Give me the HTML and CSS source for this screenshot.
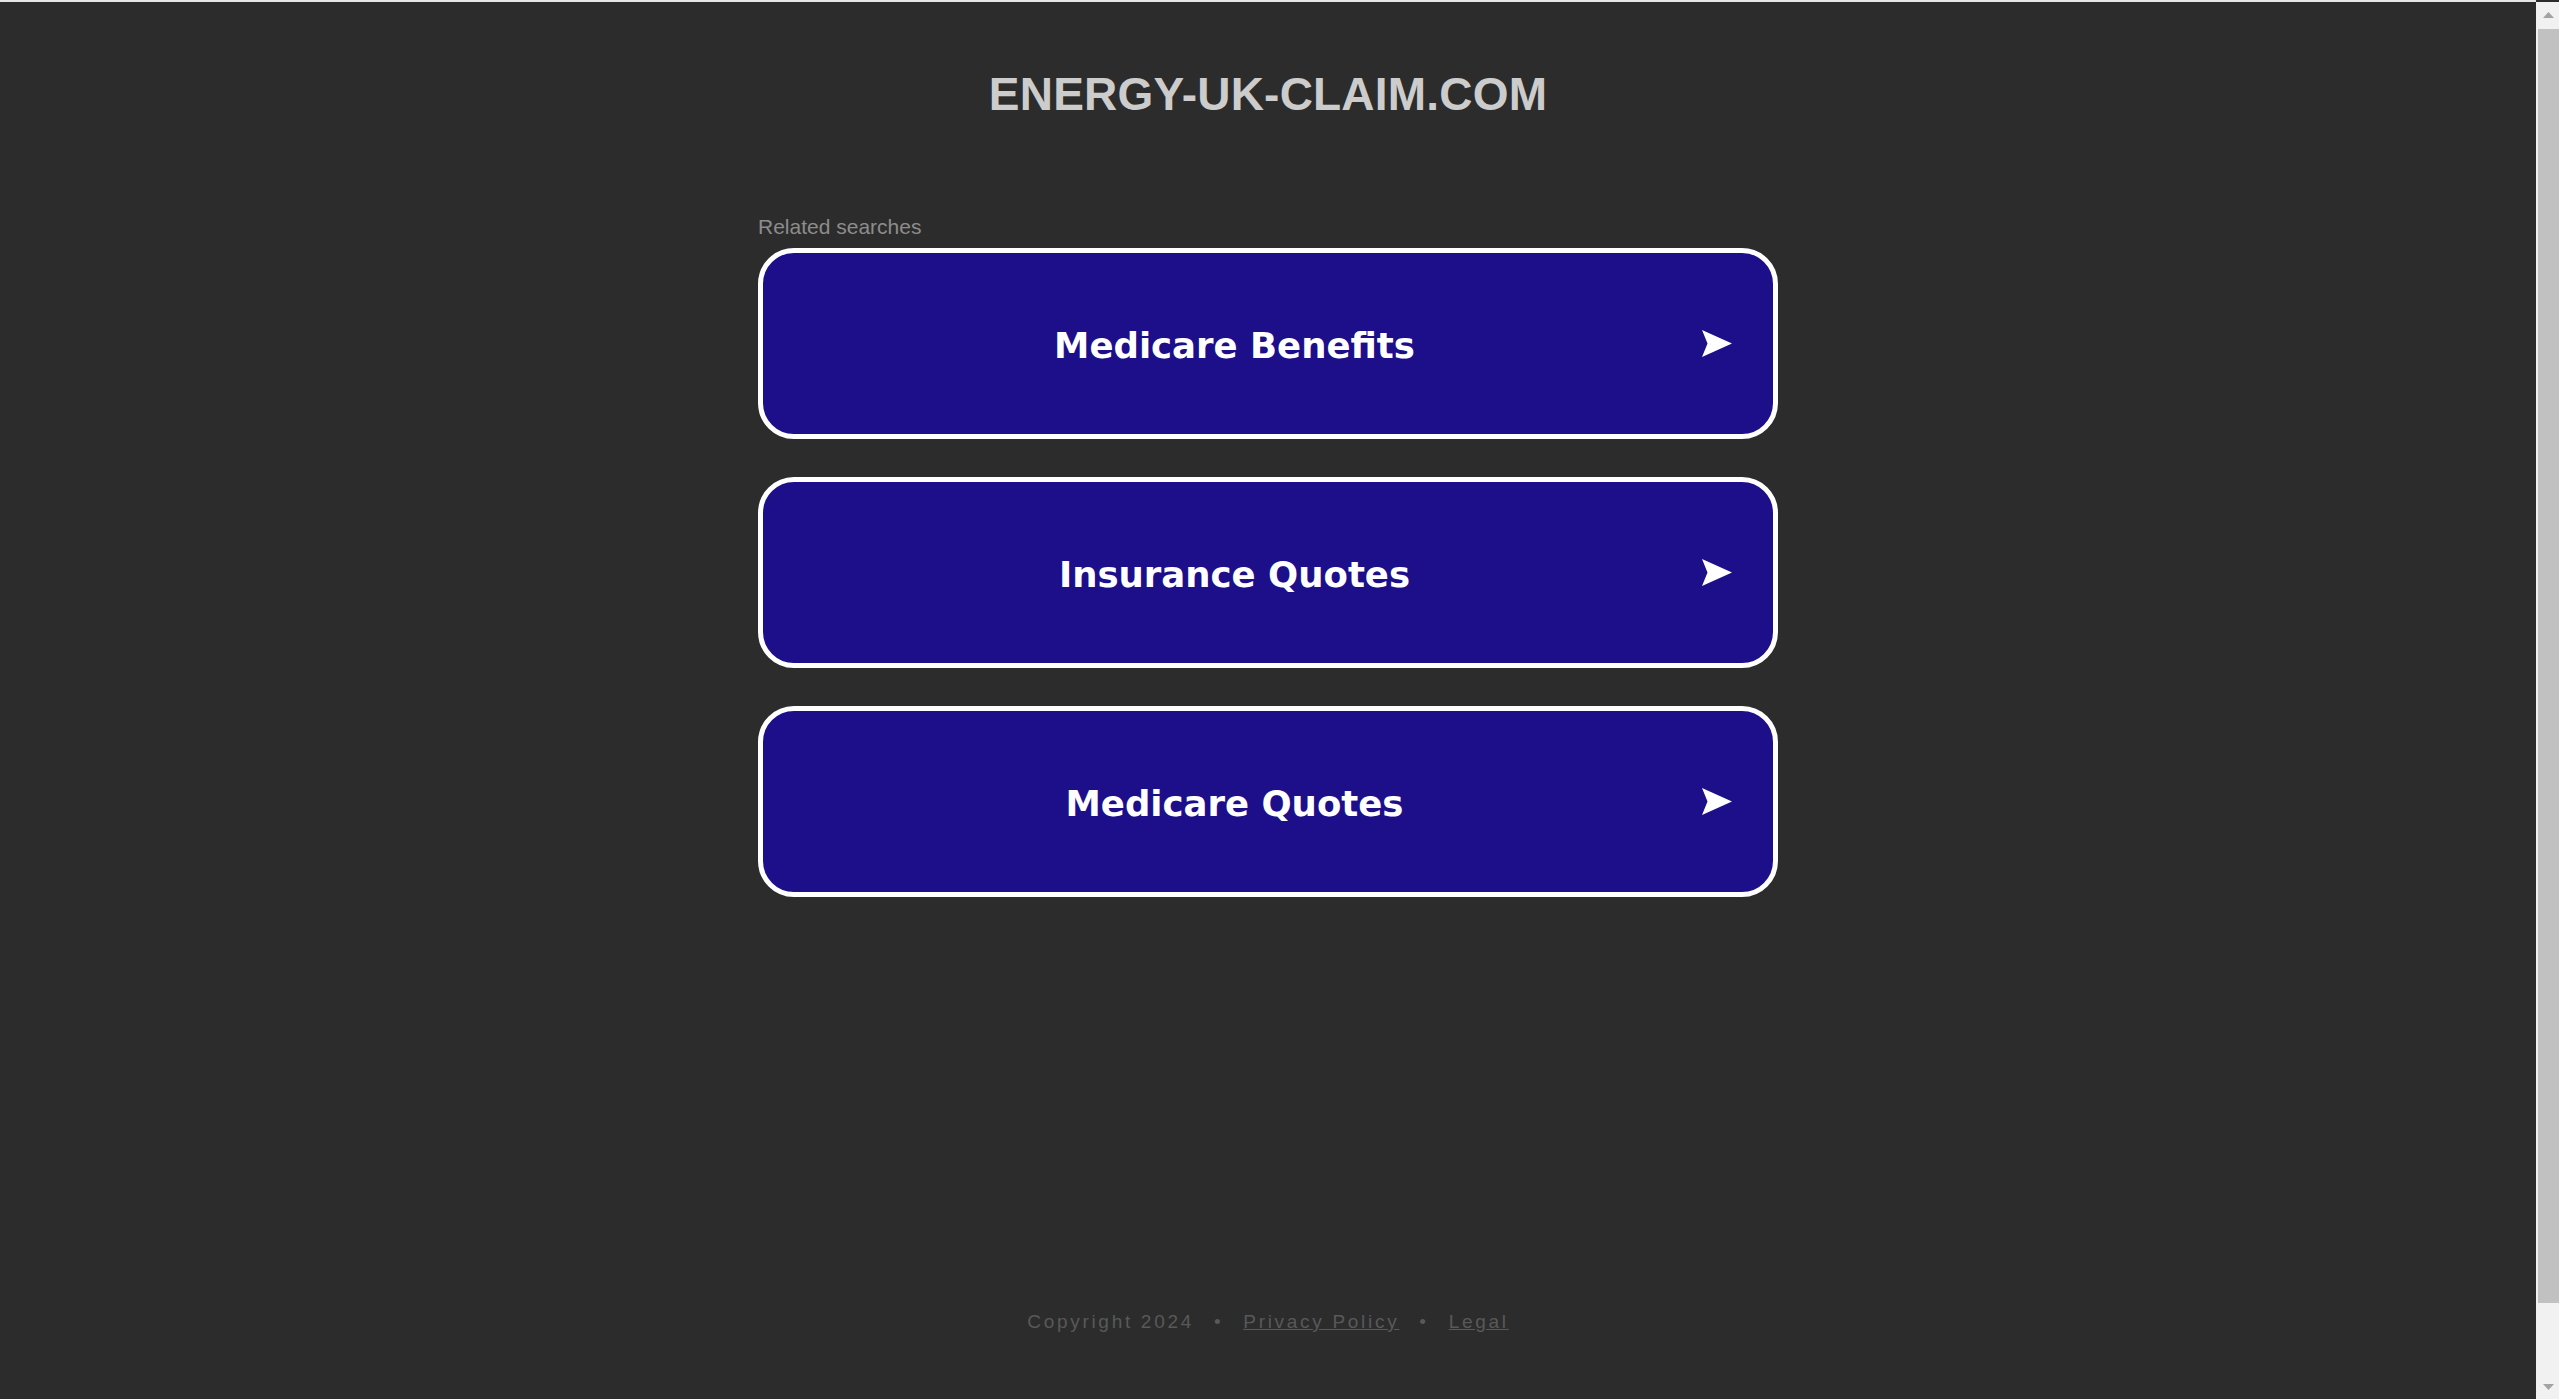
FILE: index.html
```html
<!DOCTYPE html>
<html lang="en">
<head>
<meta charset="utf-8">
<title>energy-uk-claim.com</title>
<link rel="stylesheet" href="styles.css">
</head>
<body>
<div class="page">
  <header class="header">
    <h1 class="domain">ENERGY-UK-CLAIM.COM</h1>
  </header>
  <main class="main">
    <div class="label">Related searches</div>
    <ul class="links">
      <li><a class="btn" href="#"><span class="btn-text">Medicare Benefits</span><svg class="arrow" width="30" height="27" viewBox="0 0 30 27"><path d="M0 0 L30 13.5 L0 27 L5.5 13.5 Z" fill="#fff"/></svg></a></li>
      <li><a class="btn" href="#"><span class="btn-text">Insurance Quotes</span><svg class="arrow" width="30" height="27" viewBox="0 0 30 27"><path d="M0 0 L30 13.5 L0 27 L5.5 13.5 Z" fill="#fff"/></svg></a></li>
      <li><a class="btn" href="#"><span class="btn-text">Medicare Quotes</span><svg class="arrow" width="30" height="27" viewBox="0 0 30 27"><path d="M0 0 L30 13.5 L0 27 L5.5 13.5 Z" fill="#fff"/></svg></a></li>
    </ul>
  </main>
  <footer class="footer">
    <span>Copyright 2024</span><span class="sep">•</span><a href="#">Privacy Policy</a><span class="sep">•</span><a href="#">Legal</a>
  </footer>
</div>
<div class="scrollbar" aria-hidden="true">
  <div class="sb-btn"><svg width="11" height="6" viewBox="0 0 11 6"><path d="M5.5 0L11 6H0z" fill="#a3a3a3"/></svg></div>
  <div class="sb-track"><div class="sb-thumb"></div></div>
  <div class="sb-btn sb-btn-down"><svg width="11" height="6" viewBox="0 0 11 6"><path d="M0 0H11L5.5 6z" fill="#a3a3a3"/></svg></div>
</div>
</body>
</html>
```

FILE: styles.css
```css
html, body {
  margin: 0;
  padding: 0;
  background: #2c2c2c;
}

.page {
  margin-right: 23px;
  border-top: 2px solid #e6e6e6;
  padding-bottom: 144px;
}

.header {
  padding-top: 69px;
  text-align: center;
}

.domain {
  margin: 0;
  font-family: "Liberation Sans", Arial, sans-serif;
  font-size: 46px;
  line-height: 46px;
  letter-spacing: 0.2px;
  font-weight: bold;
  color: #cccccc;
}

.main {
  width: 1020px;
  margin: 98px auto 0;
}

.label {
  font-family: "Liberation Sans", Arial, sans-serif;
  font-size: 21px;
  line-height: 23px;
  color: #8c8c8c;
  margin-bottom: 10px;
}

.links {
  list-style: none;
  margin: 0;
  padding: 0;
  display: flex;
  flex-direction: column;
  gap: 38px;
}

.btn {
  box-sizing: border-box;
  height: 191px;
  display: flex;
  align-items: center;
  background: #1d0e8a;
  border: 5px solid #ffffff;
  border-radius: 36px;
  text-decoration: none;
  color: #ffffff;
  padding-right: 41px;
}

.btn-text {
  flex: 1;
  text-align: center;
  margin-right: -4px;
  padding-top: 3px;
  font-family: "DejaVu Sans", Verdana, sans-serif;
  font-weight: bold;
  font-size: 35.5px;
}

.arrow {
  display: block;
  flex: none;
}

.footer {
  margin-top: 414px;
  text-align: center;
  font-family: "Liberation Sans", Arial, sans-serif;
  font-size: 19px;
  line-height: 22px;
  letter-spacing: 2.7px;
  color: #595959;
}

.footer a {
  color: #595959;
  text-decoration: underline;
}

.sep {
  margin: 0 20px;
}

/* browser scrollbar drawn over the right edge */
.scrollbar {
  position: fixed;
  top: 2px;
  right: 0;
  bottom: 0;
  width: 23px;
  background: #f1f1f1;
  display: flex;
  flex-direction: column;
}

.sb-btn {
  flex: none;
  height: 27px;
  display: flex;
  justify-content: center;
  padding-left: 2px;
  align-items: flex-start;
  box-sizing: border-box;
  padding-top: 10px;
}

.sb-btn-down {
  padding-top: 12px;
}

.sb-btn svg {
  display: block;
}

.sb-track {
  flex: 1;
  padding-left: 2px;
}

.sb-thumb {
  height: 1274px;
  background: #c1c1c1;
}
```
